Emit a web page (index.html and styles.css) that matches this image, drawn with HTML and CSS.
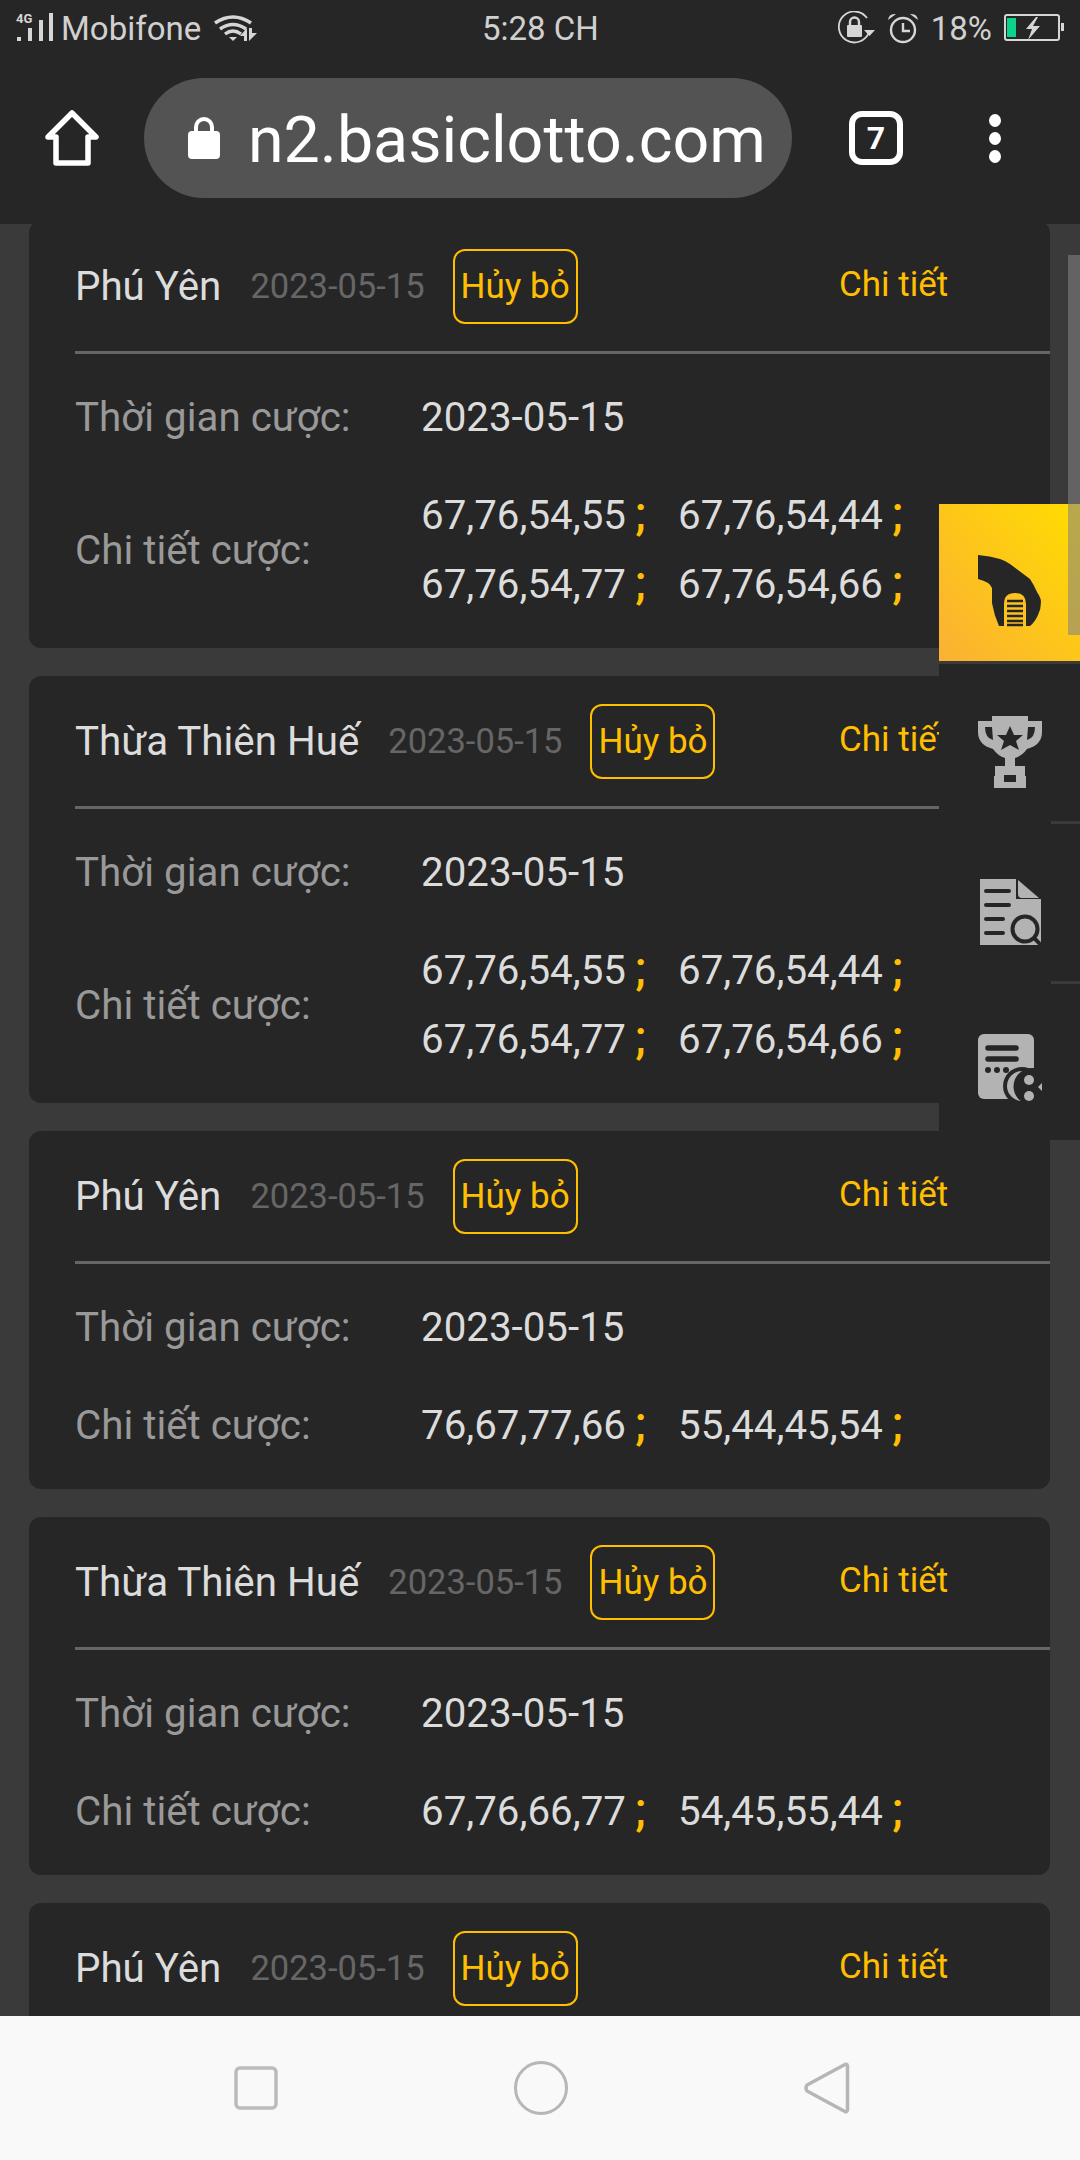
FILE: index.html
```html
<!DOCTYPE html>

<html>
<head>
  <title>n2.basiclotto.com</title>
  <link rel="stylesheet" href="styles.css">
</head>
<body>
  <div class="phone">
    <div class="status-bar">
      <div class="status-left">
        <svg class="signal" width="40" height="36" viewBox="0 -3 40 36">
          <text x="0" y="10" class="signal-label">4G</text>
          <rect x="1" y="24" width="4" height="4" fill="#d6d6d6"/>
          <rect x="12" y="15" width="4" height="13" fill="#d6d6d6"/>
          <rect x="23" y="7" width="4" height="21" fill="#d6d6d6"/>
          <rect x="33" y="0" width="4" height="28" fill="#d6d6d6"/>
        </svg>
        <span class="carrier">Mobifone</span>
        <svg class="wifi" width="44" height="28" viewBox="0 0 44 28">
          <g fill="none" stroke="#d6d6d6" stroke-width="3.4">
            <path d="M1 9 Q19 -3 37 9"/>
            <path d="M6 15 Q19 6 32 15"/>
            <path d="M11 20 Q19 14 27 20"/>
          </g>
          <path d="M15 23 L23 23 L19 27 Z" fill="#d6d6d6"/>
          <path d="M33 14 V27 H30 V22 L26 22 Z M35 14 H38 V19 L43 19 L35 27 Z" fill="#d6d6d6"/>
        </svg>
      </div>
      <div class="status-time">5:28 CH</div>
      <div class="status-right">
        <svg width="37" height="34" viewBox="0 0 37 34">
          <path d="M31 21 A15.5 15.5 0 1 1 29 7" fill="none" stroke="#d6d6d6" stroke-width="1.8"/>
          <path d="M26 19 H37 L31.5 25 Z" fill="#d6d6d6"/>
          <rect x="9" y="14" width="15" height="12" rx="1" fill="#d6d6d6"/>
          <path d="M12 15 V11 A4.5 4.5 0 0 1 21 11 V15" fill="none" stroke="#d6d6d6" stroke-width="2.4"/>
        </svg>
        <svg width="32" height="32" viewBox="0 0 32 32">
          <circle cx="16" cy="18" r="12" fill="none" stroke="#d6d6d6" stroke-width="2.4"/>
          <path d="M16 11 V19 H23" fill="none" stroke="#d6d6d6" stroke-width="2.4"/>
          <path d="M1 8 Q2 1 9 2 Z M31 8 Q30 1 23 2 Z" fill="#d6d6d6"/>
        </svg>
        <span class="battery-text">18%</span>
        <svg width="60" height="28" viewBox="0 0 60 28">
          <rect x="1" y="1" width="54" height="25" rx="2" fill="none" stroke="#d6d6d6" stroke-width="2"/>
          <rect x="3" y="4" width="9" height="19" fill="#0ad48c"/>
          <path d="M32 3 L22 15 H28 L24 26 L36 12 H29 L34 3 Z" fill="#d6d6d6"/>
          <rect x="57" y="9" width="3" height="8" fill="#d6d6d6"/>
        </svg>
      </div>
    </div>

    <div class="toolbar">
      <svg class="home-icon" width="56" height="56" viewBox="0 0 56 56">
        <path d="M4 27 L28 3 L52 27 H44 V53 H12 V27 Z" fill="none" stroke="#fff" stroke-width="5.5" stroke-linejoin="round"/>
      </svg>
      <div class="url-bar">
        <svg class="lock-icon" width="32" height="42" viewBox="0 0 32 42">
          <rect x="0" y="14" width="32" height="28" rx="4" fill="#fff"/>
          <path d="M8 16 V10 A8 8 0 0 1 24 10 V16" fill="none" stroke="#fff" stroke-width="4"/>
        </svg>
        <span class="url-text">n2.basiclotto.com</span>
      </div>
      <div class="tab-count">7</div>
      <div class="menu-dots"><i></i><i></i><i></i></div>
    </div>

    <div class="content">
      <div class="card-list">

        <div class="card">
          <div class="card-head">
            <span class="province">Phú Yên</span>
            <span class="date">2023-05-15</span>
            <span class="cancel-btn">Hủy bỏ</span>
            <span class="detail-link">Chi tiết</span>
          </div>
          <div class="card-body">
            <div class="row">
              <span class="row-label">Thời gian cược:</span>
              <span class="row-value">2023-05-15</span>
            </div>
            <div class="row">
              <span class="row-label">Chi tiết cược:</span>
              <div class="bets">
                <span class="bet">67,76,54,55<b>;</b></span>
                <span class="bet">67,76,54,44<b>;</b></span>
                <span class="bet">67,76,54,77<b>;</b></span>
                <span class="bet">67,76,54,66<b>;</b></span>
              </div>
            </div>
          </div>
        </div>

        <div class="card">
          <div class="card-head">
            <span class="province">Thừa Thiên Huế</span>
            <span class="date">2023-05-15</span>
            <span class="cancel-btn">Hủy bỏ</span>
            <span class="detail-link">Chi tiết</span>
          </div>
          <div class="card-body">
            <div class="row">
              <span class="row-label">Thời gian cược:</span>
              <span class="row-value">2023-05-15</span>
            </div>
            <div class="row">
              <span class="row-label">Chi tiết cược:</span>
              <div class="bets">
                <span class="bet">67,76,54,55<b>;</b></span>
                <span class="bet">67,76,54,44<b>;</b></span>
                <span class="bet">67,76,54,77<b>;</b></span>
                <span class="bet">67,76,54,66<b>;</b></span>
              </div>
            </div>
          </div>
        </div>

        <div class="card">
          <div class="card-head">
            <span class="province">Phú Yên</span>
            <span class="date">2023-05-15</span>
            <span class="cancel-btn">Hủy bỏ</span>
            <span class="detail-link">Chi tiết</span>
          </div>
          <div class="card-body">
            <div class="row">
              <span class="row-label">Thời gian cược:</span>
              <span class="row-value">2023-05-15</span>
            </div>
            <div class="row">
              <span class="row-label">Chi tiết cược:</span>
              <div class="bets">
                <span class="bet">76,67,77,66<b>;</b></span>
                <span class="bet">55,44,45,54<b>;</b></span>
              </div>
            </div>
          </div>
        </div>

        <div class="card">
          <div class="card-head">
            <span class="province">Thừa Thiên Huế</span>
            <span class="date">2023-05-15</span>
            <span class="cancel-btn">Hủy bỏ</span>
            <span class="detail-link">Chi tiết</span>
          </div>
          <div class="card-body">
            <div class="row">
              <span class="row-label">Thời gian cược:</span>
              <span class="row-value">2023-05-15</span>
            </div>
            <div class="row">
              <span class="row-label">Chi tiết cược:</span>
              <div class="bets">
                <span class="bet">67,76,66,77<b>;</b></span>
                <span class="bet">54,45,55,44<b>;</b></span>
              </div>
            </div>
          </div>
        </div>

        <div class="card">
          <div class="card-head">
            <span class="province">Phú Yên</span>
            <span class="date">2023-05-15</span>
            <span class="cancel-btn">Hủy bỏ</span>
            <span class="detail-link">Chi tiết</span>
          </div>
        </div>

      </div>

      <div class="side-menu">
        <div class="side-item active">
          <svg width="64" height="72" viewBox="0 0 64 72">
            <path d="M0 0 Q12 1 22 4 Q28 6 32 9 L52 24 Q56 30 59 37 Q63 43 63 47 Q63 54 60 60 Q57 67 52 71 H21 Q16 60 14 48 V33 Q12 27 0 24 Z" fill="#262626"/>
            <path d="M26 71 V49 Q26 38 37 38 Q48 38 48 49 V71 Z" fill="#fcc21f"/>
            <path d="M29 46 H45 M29 51 H45 M29 56 H45 M29 61 H45 M29 66 H45 M29 70 H45" stroke="#262626" stroke-width="2.6"/>
          </svg>
        </div>
        <div class="side-item">
          <svg width="64" height="72" viewBox="0 0 64 72">
            <path d="M14 0 H50 V5 H64 V16 Q64 29 49 33 Q44 40 37 42 V50 H47 V60 H48 V72 H16 V60 H17 V50 H27 V42 Q20 40 15 33 Q0 29 0 16 V5 H14 Z" fill="#b3b3b3"/>
            <path d="M7 11 H14 L15 24 Q7 22 7 11 Z M57 11 H50 L49 24 Q57 22 57 11 Z" fill="#262626"/>
            <path d="M32 10 L36 19 L45 19 L38 25 L41 34 L32 29 L23 34 L26 25 L19 19 L28 19 Z" fill="#262626"/>
            <rect x="26" y="59" width="12" height="7" fill="#262626"/>
          </svg>
        </div>
        <div class="side-item">
          <svg width="62" height="67" viewBox="0 0 62 67">
            <path d="M1 0 H37 V20 H62 V66 H1 Z" fill="#b3b3b3"/>
            <path d="M39 1 L60 19 H43 Q39 19 39 15 Z" fill="#b3b3b3"/>
            <path d="M7 12 H30 M7 26 H30 M7 40 H24 M7 54 H24" stroke="#262626" stroke-width="4" stroke-linecap="round"/>
            <circle cx="46" cy="50" r="12.5" fill="#b3b3b3" stroke="#262626" stroke-width="4"/>
            <path d="M55 59 L62 66" stroke="#262626" stroke-width="4"/>
          </svg>
        </div>
        <div class="side-item">
          <svg width="64" height="72" viewBox="0 0 64 72">
            <rect x="0" y="0" width="56" height="65" rx="6" fill="#b3b3b3"/>
            <path d="M10 14 H38 M10 25 H38" stroke="#262626" stroke-width="5.5" stroke-linecap="round"/>
            <circle cx="10" cy="36" r="3" fill="#262626"/>
            <circle cx="19" cy="36" r="3" fill="#262626"/>
            <circle cx="28" cy="36" r="3" fill="#262626"/>
            <circle cx="44" cy="52" r="19" fill="#262626"/>
            <circle cx="44" cy="52" r="15" fill="#b3b3b3"/>
            <path d="M64 34 H54 A18 18 0 0 0 54 71 H64 Z" fill="#262626"/>
            <circle cx="51" cy="46" r="5" fill="#b3b3b3"/>
            <circle cx="51" cy="62" r="5" fill="#b3b3b3"/>
            <path d="M64 49 L60 53 L64 57 Z" fill="#b3b3b3"/>
          </svg>
        </div>
      </div>

      <div class="scrollbar"></div>
    </div>

    <div class="nav-bar">
      <svg width="44" height="44" viewBox="0 0 44 44">
        <rect x="2" y="2" width="40" height="40" rx="4" fill="none" stroke="#bbb" stroke-width="3.5"/>
      </svg>
      <svg width="54" height="54" viewBox="0 0 54 54">
        <circle cx="27" cy="27" r="25.5" fill="none" stroke="#b6b6b6" stroke-width="3"/>
      </svg>
      <svg width="46" height="52" viewBox="0 0 46 52">
        <path d="M43.5 4 Q43 1 40 3 L3 23 Q1 26 3 29 L40 49 Q43 51 43.5 48 Z" fill="none" stroke="#b6b6b6" stroke-width="3.5" stroke-linejoin="round"/>
      </svg>
    </div>
  </div>
</body>
</html>
```

FILE: styles.css
```css
* {
  box-sizing: border-box;
}
body {
  margin: 0;
  font-family: Roboto, "Noto Sans", sans-serif;
  background-color: #3a3a3a;
}
.phone {
  width: 1080px;
  height: 2160px;
  display: flex;
  flex-direction: column;
  overflow: hidden;
  background-color: #3a3a3a;
}

/* status bar */
.status-bar {
  height: 56px;
  flex: none;
  display: flex;
  align-items: center;
  justify-content: space-between;
  position: relative;
  background-color: #262626;
  color: #d0d0d0;
  padding: 0 16px;
}
.status-left {
  display: flex;
  align-items: center;
}
.signal-label {
  font-size: 13px;
  font-weight: 700;
  fill: #d6d6d6;
}
.carrier {
  font-size: 33px;
  margin-left: 5px;
}
.wifi {
  margin-left: 13px;
}
.status-time {
  position: absolute;
  left: 482px;
  font-size: 33px;
}
.status-right {
  display: flex;
  align-items: center;
  gap: 12px;
}
.battery-text {
  font-size: 33px;
}

/* browser toolbar */
.toolbar {
  height: 168px;
  flex: none;
  display: flex;
  align-items: center;
  padding: 0 0 4px 44px;
  background-color: #262626;
}
.url-bar {
  width: 648px;
  height: 120px;
  margin-left: 44px;
  padding-left: 44px;
  border-radius: 60px;
  background-color: #535353;
  display: flex;
  align-items: center;
}
.url-text {
  font-size: 64.5px;
  color: #fff;
  margin-left: 28px;
  padding-top: 4px;
  white-space: nowrap;
}
.tab-count {
  width: 54px;
  height: 54px;
  margin-left: 57px;
  border: 6px solid #fff;
  border-radius: 13px;
  color: #fff;
  font-size: 32px;
  font-weight: 700;
  display: flex;
  align-items: center;
  justify-content: center;
}
.menu-dots {
  margin-left: 86px;
  display: flex;
  flex-direction: column;
  gap: 5px;
}
.menu-dots i {
  display: block;
  width: 12px;
  height: 13px;
  border-radius: 50%;
  background-color: #fff;
}

/* bet cards */
.content {
  flex: 1;
  position: relative;
  overflow: hidden;
}
.card-list {
  display: flex;
  flex-direction: column;
  gap: 28px;
  margin-top: -3px;
  padding-left: 29px;
  width: 1050px;
}
.card {
  background-color: #262626;
  border-radius: 12px;
  padding-bottom: 40px;
}
.card-head {
  height: 133px;
  margin-left: 46px;
  display: flex;
  align-items: center;
  border-bottom: 3px solid #666;
  position: relative;
}
.province {
  font-size: 40.3px;
  color: #dcdcdc;
}
.date {
  font-size: 34.5px;
  color: #666;
  margin-left: 29px;
}
.cancel-btn {
  margin-left: 28px;
  width: 125px;
  height: 75px;
  border: 2.5px solid #ffbf00;
  border-radius: 12px;
  color: #ffbf00;
  font-size: 35px;
  display: flex;
  align-items: center;
  justify-content: center;
}
.detail-link {
  position: absolute;
  left: 764px;
  top: 43px;
  font-size: 35px;
  color: #ffbf00;
}
.card-body {
  margin-left: 46px;
  padding-top: 40px;
  display: flex;
  flex-direction: column;
  gap: 51px;
}
.row {
  display: flex;
  align-items: center;
}
.row-label {
  width: 346px;
  font-size: 40.3px;
  line-height: 47px;
  color: #999;
}
.row-value {
  font-size: 40.3px;
  line-height: 47px;
  color: #dcdcdc;
}
.bets {
  display: grid;
  grid-template-columns: 257px 257px;
  row-gap: 22px;
}
.bet {
  font-size: 40.3px;
  line-height: 47px;
  color: #dcdcdc;
  white-space: nowrap;
}
.bet b {
  color: #ffbf00;
  font-weight: 500;
  font-size: 46px;
  line-height: 0;
  margin-left: 9px;
}

/* scrollbar + floating menu */
.scrollbar {
  position: absolute;
  right: 0;
  top: 31px;
  width: 12px;
  height: 380px;
  background-color: rgba(130, 130, 130, 0.57);
}
.side-menu {
  position: absolute;
  left: 939px;
  top: 280px;
  width: 141px;
  display: flex;
  flex-direction: column;
}
.side-item {
  height: 160px;
  padding-top: 16px;
  display: flex;
  align-items: center;
  justify-content: center;
  background-color: #262626;
  position: relative;
}
.side-item::after {
  content: "";
  position: absolute;
  right: 0;
  bottom: 0;
  width: 29px;
  height: 3px;
  background-color: #3a3a3a;
}
.side-item:last-child {
  height: 156px;
}
.side-item:last-child::after {
  display: none;
}
.side-item.active {
  height: 160px;
  border-bottom: 3px solid #3a3a3a;
  background: linear-gradient(to top right, #fbb034, #ffdd00);
  background-clip: padding-box;
}
.side-item.active::after {
  display: none;
}

/* android nav */
.nav-bar {
  height: 144px;
  flex: none;
  background-color: #f9f9f9;
  display: flex;
  align-items: center;
  position: relative;
  padding-left: 234px;
  gap: 236px;
}
```
